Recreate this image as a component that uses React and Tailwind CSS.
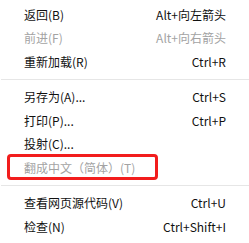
import React from 'react';

const groups = [
  [
    { label: '返回(B)', key: 'Alt+向左箭头' },
    { label: '前进(F)', key: 'Alt+向右箭头', disabled: true },
    { label: '重新加载(R)', key: 'Ctrl+R' },
  ],
  [
    { label: '另存为(A)...', key: 'Ctrl+S' },
    { label: '打印(P)...', key: 'Ctrl+P' },
    { label: '投射(C)...' },
    { label: '翻成中文（简体）(T)', disabled: true, marked: true },
  ],
  [
    { label: '查看网页源代码(V)', key: 'Ctrl+U' },
    { label: '检查(N)', key: 'Ctrl+Shift+I' },
  ],
];

function Item({ item }) {
  return (
    <div
      className={`relative flex h-[23.5px] items-center justify-between pl-[24px] pr-[23px] text-[12px] leading-none ${
        item.disabled ? 'text-[#a3a3a3]' : 'text-[#111]'
      }`}
    >
      <span>{item.label}</span>
      {item.key && <span>{item.key}</span>}
      {item.marked && (
        <div className="absolute left-[7px] top-[-2px] h-[26px] w-[151px] rounded-[4px] border-[3px] border-[#f21d1d]" />
      )}
    </div>
  );
}

export default function App() {
  return (
    <div
      className="h-[243px] w-[249px] bg-white pt-[3px]"
      style={{ fontFamily: '"Noto Sans CJK SC", "Noto Sans", sans-serif' }}
    >
      {groups.map((g, i) => (
        <div key={i}>
          {i > 0 && <div className="my-[5.5px] ml-[1px] h-px bg-[#e6e6e6]" />}
          {g.map((item) => (
            <Item key={item.label} item={item} />
          ))}
        </div>
      ))}
    </div>
  );
}
